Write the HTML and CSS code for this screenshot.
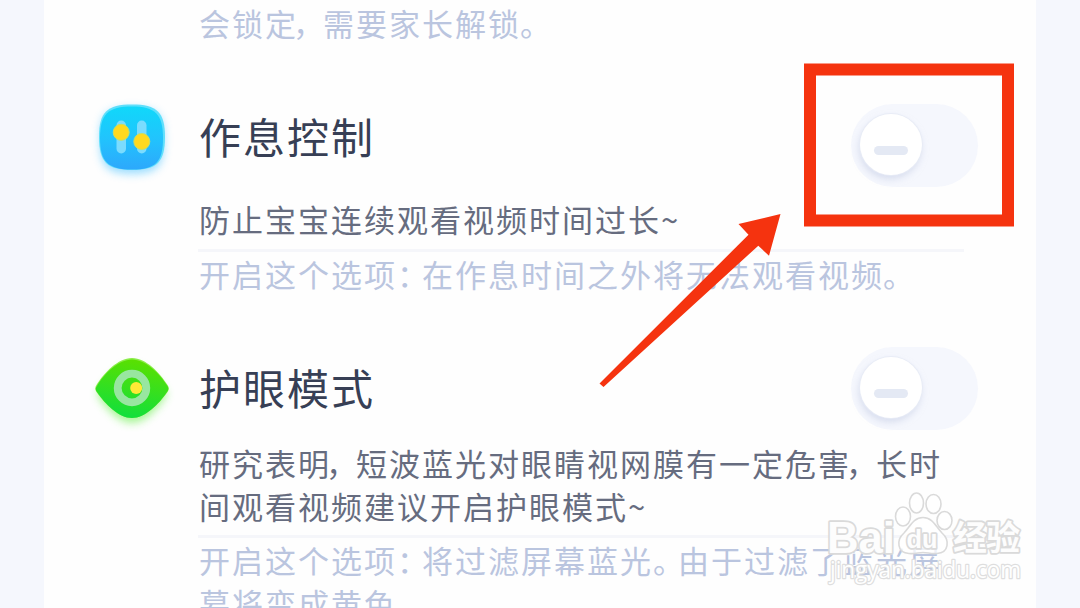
FILE: index.html
```html
<!DOCTYPE html>
<html lang="zh-CN">
<head>
  <meta charset="UTF-8">
  <meta name="viewport" content="width=device-width, initial-scale=1.0">
  <title>作息控制</title>
  <link rel="stylesheet" href="styles.css">
</head>
<body>

  <main class="card">
    <p class="hint hint-first">会锁定<span class="comma">，</span>需要家长解锁<span class="stop">。</span></p>

    <section class="setting rest">
      <svg class="icon" width="110" height="100" viewBox="0 0 110 100">
        <defs>
          <linearGradient id="blue" x1="0" y1="0" x2="0" y2="1">
            <stop offset="0" stop-color="#10d8fa"/>
            <stop offset="0.5" stop-color="#21c4fd"/>
            <stop offset="1" stop-color="#2da8fc"/>
          </linearGradient>
          <filter id="glow" x="-30%" y="-30%" width="160%" height="160%">
            <feGaussianBlur stdDeviation="4"/>
          </filter>
        </defs>
        <path d="M52 18C78 18 84 24 84 50S78 84 52 84 20 76 20 50 26 18 52 18Z" fill="#5bc8ff" opacity="0.6" filter="url(#glow)"/>
        <path d="M52 14.500C77 14.500 85 22 85 47S77 80 52 80 19 72 19 47 27 14.500 52 14.500Z" fill="#5fdffb"/>
        <path d="M52 16.500C75 16.500 83 24 83 48S76 79.500 52 79.500 20 72 20 48 28 16.500 52 16.500Z" fill="url(#blue)"/>
        <rect x="36.500" y="30.500" width="9.500" height="33" rx="4.700" fill="#7bdcfe"/>
        <rect x="57" y="30.500" width="9.500" height="33" rx="4.700" fill="#7bdcfe"/>
        <circle cx="41.200" cy="42.300" r="8" fill="#ffd91f" stroke="#c9de63" stroke-width="1"/>
        <circle cx="61.800" cy="51.500" r="8" fill="#ffd91f" stroke="#c9de63" stroke-width="1"/>
      </svg>
      <div class="content">
        <div class="head">
          <h2>作息控制</h2>
          <div class="toggle"><span class="knob"></span></div>
        </div>
        <p class="desc">防止宝宝连续观看视频时间过长~</p>
        <p class="hint">开启这个选项<span class="punct">：</span>在作息时间之外将无法观看视频<span class="stop">。</span></p>
      </div>
    </section>

    <section class="setting eye">
      <svg class="icon" width="110" height="100" viewBox="0 0 110 100">
        <defs>
          <linearGradient id="green" x1="0.600" y1="0" x2="0.400" y2="1">
            <stop offset="0" stop-color="#5be000"/>
            <stop offset="1" stop-color="#10df3d"/>
          </linearGradient>
        </defs>
        <path d="M17 54C25 42 38 25 52 25S79 42 87 54C79 68 65 83 52 83S25 68 17 54Z" fill="#69f04c" opacity="0.6" filter="url(#glow)"/>
        <path d="M16.500 45C24 33 38 18 52 18S80 33 87.500 45Q90 48.500 87.500 52C79 64 65 78 52 78S25 64 16.500 52Q14 48.500 16.500 45Z" fill="#8bed48"/>
        <path d="M17 46C24 34 38 19.500 52 19.500S80 34 87.500 46Q89.500 49 87 52C79 64 65 78 52 78S25 64 17 52Q14.500 49 17 46Z" fill="url(#green)"/>
        <circle cx="52" cy="48" r="14.300" fill="none" stroke="#98e6a0" stroke-width="7.800"/>
        <circle cx="56.200" cy="48" r="6" fill="#ffe936"/>
      </svg>
      <div class="content">
        <div class="head">
          <h2>护眼模式</h2>
          <div class="toggle"><span class="knob"></span></div>
        </div>
        <p class="desc">研究表明<span class="comma">，</span>短波蓝光对眼睛视网膜有一定危害<span class="comma">，</span>长时<br>间观看视频建议开启护眼模式~</p>
        <p class="hint">开启这个选项<span class="punct">：</span>将过滤屏幕蓝光<span class="punct">。</span>由于过滤了蓝光屏<br>幕将变成黄色</p>
      </div>
    </section>
  </main>

  <!-- red frame and arrow over the first switch -->
  <svg class="marker" width="1080" height="608" viewBox="0 0 1080 608">
    <rect x="810" y="69.500" width="198" height="151" fill="none" stroke="#f5330f" stroke-width="12"/>
    <path d="M780.500 214 738.500 224 748.500 234.700 599.500 383.500 603.500 387 758.300 245.700 769 255.700Z" fill="#f5330f"/>
  </svg>

  <svg class="watermark" width="210" height="110" viewBox="0 0 210 110">
    <g class="wm-shape">
      <text class="wm-logo" x="6" y="72.500" textLength="68" lengthAdjust="spacingAndGlyphs">Bai</text>
      <ellipse cx="82" cy="36.500" rx="7.500" ry="9.500"/>
      <ellipse cx="95.500" cy="23" rx="7" ry="10"/>
      <ellipse cx="112.500" cy="24" rx="7.500" ry="9.500"/>
      <ellipse cx="123.500" cy="40.500" rx="7.500" ry="9"/>
      <path d="M102 37.500C112 37.500 115 47 121 53C129 60 128 73 116 73.500C109 74 107 72.500 102 72.500S95 74 88 73.500C76 73 75 60 83 53C89 47 92 37.500 102 37.500Z"/>
      <text class="wm-du" x="85.500" y="67.500" textLength="31" lengthAdjust="spacingAndGlyphs">du</text>
      <text class="wm-cn" x="132" y="70" textLength="67">经验</text>
    </g>
    <text class="wm-url" x="9" y="98" textLength="191" lengthAdjust="spacingAndGlyphs">jingyan.baidu.com</text>
  </svg>

</body>
</html>
```

FILE: styles.css
```css
* {
  box-sizing: border-box;
}

body {
  font-family: "Noto Sans CJK SC", sans-serif;
  background-color: #f5f7fd;
  margin: 0;
  height: 608px;
  position: relative;
  overflow: hidden;
}

h2,
p {
  margin: 0;
  white-space: nowrap;
}

.card {
  width: 992px;
  height: 608px;
  margin: 0 auto 0 44px;
  padding: 1px 72px 0 36px;
  background-color: #fefefe;
  overflow: hidden;
}

.hint,
.desc {
  font-size: 31px;
  line-height: 43px;
  letter-spacing: 2px;
}

.hint {
  color: #bac5df;
}

.desc {
  color: #666c7f;
}

.punct {
  letter-spacing: -6px;
}

.comma {
  margin-left: -5px;
  letter-spacing: -1px;
}

.stop {
  margin-left: -1px;
}

.hint-first {
  padding-left: 119px;
}

.setting {
  display: flex;
  align-items: flex-start;
}

.rest {
  margin-top: 60px;
}

.eye {
  margin-top: 52px;
}

.icon {
  flex: none;
  width: 110px;
  height: 100px;
  margin-top: -14px;
}

.eye .icon {
  margin-top: -7px;
}

.content {
  flex: 1;
  padding-left: 8px;
}

.head {
  display: flex;
  justify-content: space-between;
  align-items: flex-start;
  height: 83px;
  margin-right: -14px;
  margin-bottom: 10px;
}

.eye .head {
  margin-bottom: 11px;
}

h2 {
  font-size: 42px;
  font-weight: 400;
  line-height: 60px;
  letter-spacing: 2px;
  color: #373f55;
  padding: 2px 0 0 1px;
}

.eye h2 {
  padding-top: 10px;
}

.toggle {
  width: 127px;
  height: 83px;
  padding: 10px 9px;
  border-radius: 42px;
  background-color: #f5f7fd;
}

.knob {
  display: flex;
  justify-content: center;
  width: 62px;
  height: 61px;
  padding-top: 32px;
  border-radius: 50%;
  background-color: #fff;
  box-shadow: 0 0 1px 1px #e8ecf6, -1px 4px 7px rgba(190, 198, 225, 0.55);
}

.knob::after {
  content: "";
  width: 34px;
  height: 9px;
  border-radius: 5px;
  background-color: #e4e9f4;
}

.content .desc,
.content .hint {
  padding-left: 1px;
}

.content .desc {
  padding-bottom: 9px;
  border-bottom: 3px solid #f5f6fa;
}

.eye .desc {
  padding-bottom: 8px;
}

.marker {
  position: absolute;
  top: 0;
  left: 0;
}

.watermark {
  position: absolute;
  left: 821px;
  top: 480px;
  font-family: "Liberation Sans", "Noto Sans CJK SC", sans-serif;
  overflow: visible;
}

.wm-shape {
  fill: rgba(255, 255, 255, 0.75);
  stroke: #dadada;
  stroke-width: 1.6;
}

.wm-logo,
.wm-du,
.wm-cn {
  font-weight: bold;
  fill: #fdfdfd;
  stroke-width: 3.5;
  stroke-linejoin: round;
  paint-order: stroke;
}

.wm-logo {
  font-size: 45px;
}

.wm-du {
  font-size: 26px;
}

.wm-cn {
  font-family: "Noto Sans CJK SC", sans-serif;
  font-size: 34px;
}

.wm-url {
  font-family: "Open Sans", sans-serif;
  font-size: 23px;
  fill: #fff;
  stroke: #dedede;
  stroke-width: 2.5;
  stroke-linejoin: round;
  paint-order: stroke;
}
```
